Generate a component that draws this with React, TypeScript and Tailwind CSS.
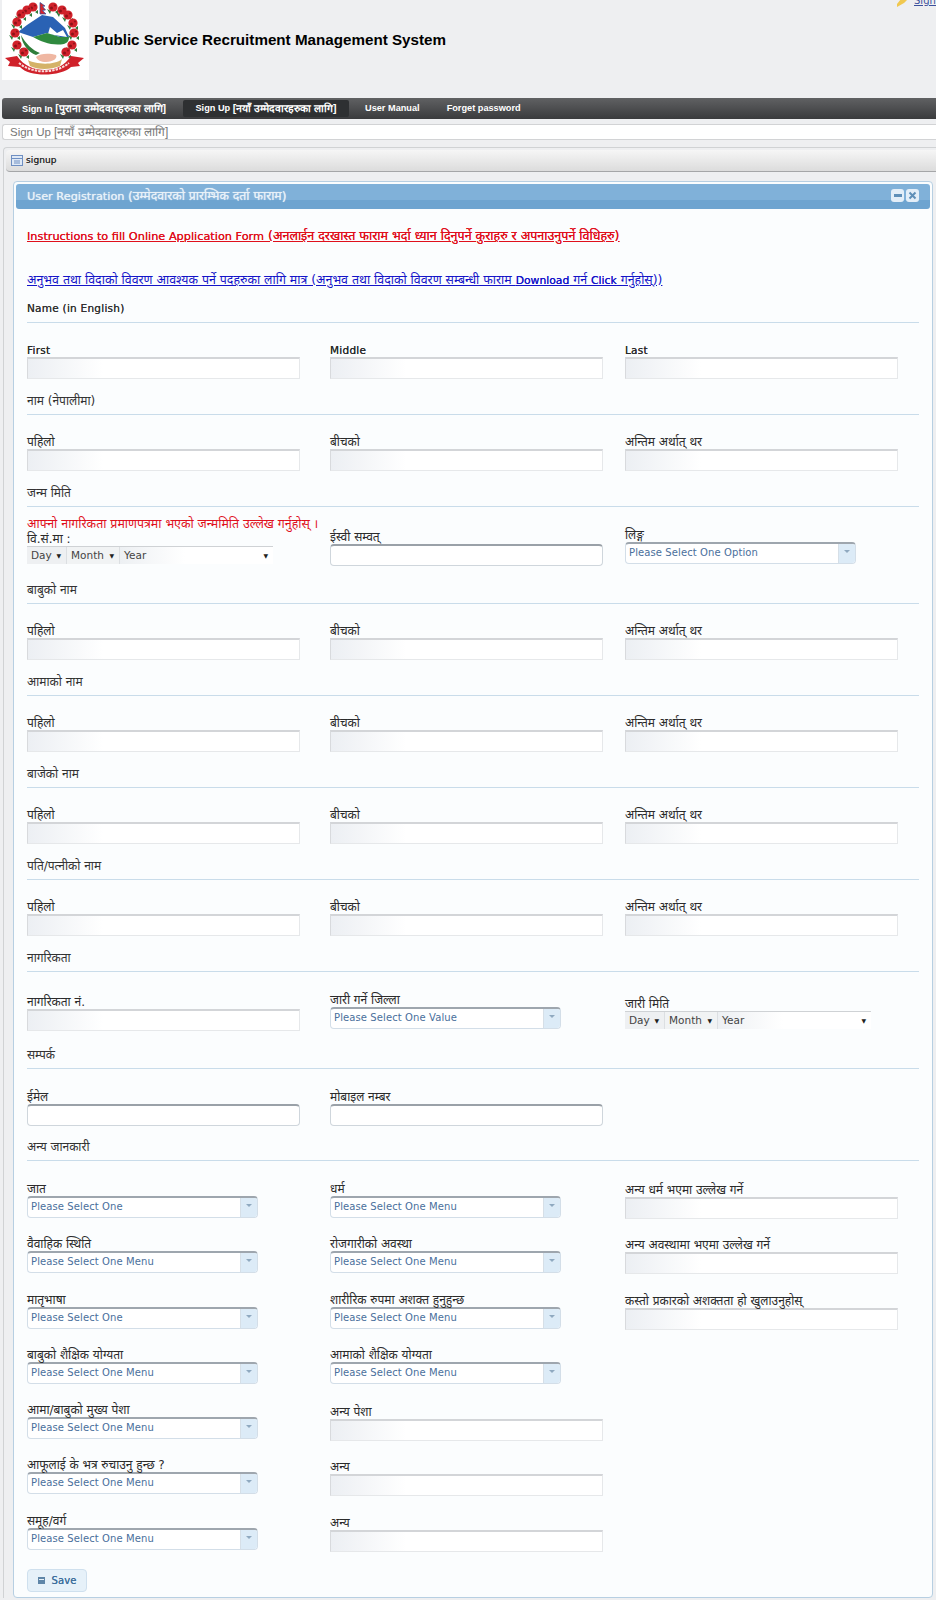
import React from "react";

const FONT = "font-['DejaVu_Sans','Noto_Sans',sans-serif]";
const SOFT = "[text-shadow:0_0_0.6px_currentColor]";

function isLatin(t: unknown) {
  return typeof t === "string" && /^[\x00-\x7f]+$/.test(t);
}

function Emblem() {
  const flowers: [number, number][] = [
    [33, 7], [27, 10], [21, 14], [17, 22], [15, 33], [17, 45], [24, 52],
    [53, 7], [62, 10], [68, 15], [73, 23], [74, 33], [72, 45], [66, 52],
  ];
  return (
    <svg width="87" height="80" viewBox="2 0 87 80" className="block">
      <rect x="2" width="87" height="80" fill="#ffffff" />
      <path d="M18 32 L27 25 L33 21 L42 15 L53 17 L65 28 L69 37 L60 37 L47 33 L33 37Z" fill="#2a62b4" />
      <path d="M50 27 L57 33 L63 30 L67 37 L48 34Z" fill="#ffffff" />
      <path d="M33 37 L47 33 L60 37 L69 37 C69 41 67 43 64 44 C52 46 42 42 33 37Z" fill="#2f8a3f" />
      <path d="M21 35 C26 44 32 50 40 53 L36 55 C28 52 22 44 21 35Z" fill="#2f7d3a" />
      <path d="M26 37 C36 44 50 48 64 45 C62 50 57 53 50 54 L41 53 C34 50 29 44 26 37Z" fill="#ffffff" />
      <path d="M36 57 C40 53 50 53 56 55 C58 58 53 62 46 62 C41 62 37 60 36 57Z" fill="#efb7a2" />
      <path d="M28 60 C34 64 54 66 62 59 L60 66 C50 70 38 70 30 66Z" fill="#d4b268" />
      {flowers.map(([x, y], i) => (
        <g key={i}>
          <path d={`M${x - 6} ${y + 2}l4 2-1 3zM${x + 5} ${y + 3}l-3 2 3 2z`} fill="#2e7a3a" />
          <circle cx={x} cy={y} r="4.6" fill="#d0212a" />
          <circle cx={x - 1.5} cy={y + 1} r="1.5" fill="#8e1218" />
          <circle cx={x + 2} cy={y - 1.5} r="1.1" fill="#96151b" />
        </g>
      ))}
      <path d="M40 2.5v11.5h6l-3.5-3.6 3-.4-3-3.6 2.5-.4z" fill="#d8242b" stroke="#2a4a9c" strokeWidth="0.7" />
      <path d="M5 58 L17 56 C24 66 34 70 45 70 C56 70 64 66 71 56 L84 58 L78 63 L80 66 L71 67 C62 76 30 78 20 67 L8 66 L10 62Z" fill="#d0212a" />
      <path d="M19 63 C32 74 56 74 69 63" fill="none" stroke="#f9dcdc" strokeWidth="2" strokeDasharray="2.5 1" />
    </svg>
  );
}

function TextInput({ rounded = false }: { rounded?: boolean }) {
  return rounded ? (
    <div className="h-[22px] w-[273px] rounded-[4px] border border-[#cfd6dc] border-t-[2px] border-t-[#9aa1a8] bg-white" />
  ) : (
    <div className="h-[22px] w-[273px] border border-[#e6e8ea] border-t-[2px] border-t-[#d3d5d8] border-l-[#d8dadd] bg-[linear-gradient(90deg,#eceff3,#ffffff_75px)]" />
  );
}

function ComboBox({ text }: { text: string }) {
  return (
    <div className="flex h-[22px] w-[231px] overflow-hidden rounded-[4px] border border-[#d3dee8] border-t-[2px] border-t-[#9ea6ae] bg-white">
      <div className="flex-1 truncate pl-[3px] text-[10px] leading-[18px] tracking-[0.1px] text-[#4a6f9c]">{text}</div>
      <div className="flex w-[17px] items-start justify-center border-l border-l-[#d6dfe7] bg-[#dcebf7] pt-[6px]">
        <div className="h-0 w-0 border-x-[3px] border-t-[3px] border-x-transparent border-t-[#8fa9c0]" />
      </div>
    </div>
  );
}

function DateSelect() {
  const seg = "flex h-[17px] items-center justify-between border-r border-r-[#dcdfe2] pl-[4px] pr-[5px] text-[10.5px] text-[#444]";
  const arrow = <span className="text-[6px] text-[#222]">▼</span>;
  return (
    <div className="flex h-[17px] w-[246px] border-t border-t-[#cfd2d5] shadow-[0_1px_0_#e8eaec]">
      <div className={`${seg} w-[40px] bg-[#eef0f2]`}><span>Day</span>{arrow}</div>
      <div className={`${seg} w-[53px] bg-[#f1f3f4]`}><span>Month</span>{arrow}</div>
      <div className={`${seg} flex-1 border-r-0 bg-[linear-gradient(90deg,#edf0f3,#ffffff_65px)]`}><span>Year</span>{arrow}</div>
    </div>
  );
}

function Label({ children }: { children: string }) {
  return (
    <div className={`h-[14px] whitespace-nowrap leading-[14px] text-[#2b2b2b] ${isLatin(children) ? `text-[10.5px] tracking-[0.25px] ${SOFT}` : "text-[12px]"}`}>
      {children}
    </div>
  );
}

function Heading({ children }: { children: string }) {
  return (
    <div className={`h-[30px] border-b border-b-[#c9dcea] leading-[14px] text-[#333] ${isLatin(children) ? `pt-[8px] text-[10.5px] tracking-[0.25px] ${SOFT}` : "pt-[9px] text-[12px]"}`}>
      {children}
    </div>
  );
}

function Grid({ className, children }: { className: string; children: React.ReactNode }) {
  return <div className={`grid grid-cols-[303px_295px_1fr] ${className}`}>{children}</div>;
}

function Names({ a, b, c }: { a: string; b: string; c: string }) {
  return (
    <Grid className="h-[62px] pt-[20px]">
      {[a, b, c].map((t) => (
        <div key={t}>
          <Label>{t}</Label>
          <TextInput />
        </div>
      ))}
    </Grid>
  );
}

function NepaliNames() {
  return <Names a="पहिलो" b="बीचको" c="अन्तिम अर्थात् थर" />;
}

function SelectCell({ label, text, top }: { label: string; text: string; top?: string }) {
  return (
    <div className={top}>
      <Label>{label}</Label>
      <ComboBox text={text} />
    </div>
  );
}

function InputCell({ label, top }: { label: string; top: string }) {
  return (
    <div className={top}>
      <Label>{label}</Label>
      <TextInput />
    </div>
  );
}

const OTHER: { a: [string, string]; b?: [string, string]; bInput?: string; c?: string }[] = [
  { a: ["जात", "Please Select One"], b: ["धर्म", "Please Select One Menu"], c: "अन्य धर्म भएमा उल्लेख गर्ने" },
  { a: ["वैवाहिक स्थिति", "Please Select One Menu"], b: ["रोजगारीको अवस्था", "Please Select One Menu"], c: "अन्य अवस्थामा भएमा उल्लेख गर्ने" },
  { a: ["मातृभाषा", "Please Select One"], b: ["शारीरिक रुपमा अशक्त हुनुहुन्छ", "Please Select One Menu"], c: "कस्तो प्रकारको अशक्तता हो खुलाउनुहोस्" },
  { a: ["बाबुको शैक्षिक योग्यता", "Please Select One Menu"], b: ["आमाको शैक्षिक योग्यता", "Please Select One Menu"] },
  { a: ["आमा/बाबुको मुख्य पेशा", "Please Select One Menu"], bInput: "अन्य पेशा" },
  { a: ["आफूलाई के भत्र रुचाउनु हुन्छ ?", "Please Select One Menu"], bInput: "अन्य" },
  { a: ["समूह/वर्ग", "Please Select One Menu"], bInput: "अन्य" },
];

export default function App() {
  return (
    <div className={`relative h-[1600px] w-[936px] overflow-hidden bg-[#eeeff1] ${FONT}`}>
      <div className="absolute left-[896px] top-[-6px] flex items-center whitespace-nowrap">
        <svg width="13" height="14" viewBox="0 0 13 14">
          <path d="M1 13 L8 9 L11 6 L11 0 L5 0 L5 5 L1 10Z" fill="#f0c850" />
        </svg>
        <span className="ml-[5px] text-[10px] leading-[14px] text-[#3b4f9c] underline">Sign In</span>
      </div>

      <header className="flex h-[98px] items-start pl-[2px]">
        <Emblem />
        <h1 className="ml-[5px] mt-[31px] font-['Liberation_Sans',sans-serif] text-[15.2px] font-bold leading-[18px] text-black">
          Public Service Recruitment Management System
        </h1>
      </header>

      <nav className="ml-[2px] flex h-[21px] items-center rounded-l-[3px] bg-[linear-gradient(#606163,#3a3b3d)] font-['Liberation_Sans','DejaVu_Sans',sans-serif] text-[9.2px] font-bold text-white">
        <span className="ml-[20px] w-[146px] whitespace-nowrap">Sign In <span className="text-[10.5px]">[पुराना उम्मेदवारहरुका लागि]</span></span>
        <span className="ml-[15px] flex h-[17px] w-[166px] items-center justify-center whitespace-nowrap rounded-[2px] bg-[#2e3032]">Sign Up&nbsp;<span className="text-[10.5px]">[नयाँ उम्मेदवारहरुका लागि]</span></span>
        <span className="ml-[16px]">User Manual</span>
        <span className="ml-[27px]">Forget password</span>
      </nav>

      <div className="ml-[2px] mt-[5px] h-[16px] rounded-l-[3px] border border-r-0 border-[#d2d3d5] bg-white pl-[7px] font-['Liberation_Sans','DejaVu_Sans',sans-serif] text-[11.5px] leading-[14px] text-[#777]">
        Sign Up <span className="text-[12px]">[नयाँ उम्मेदवारहरुका लागि]</span>
      </div>

      <main className="ml-[3px] mt-[7px] rounded-tl-[4px] border-l border-t border-[#d0d2d4] pl-[2px] pt-[2px]">
        <div className="flex h-[22px] items-center rounded-l-[4px] border-b border-b-[#a5a6a8] bg-[linear-gradient(#f6f6f6,#dcdcdc)] pl-[5px]">
          <svg width="12" height="11" viewBox="0 0 12 11">
            <rect x="0.5" y="0.5" width="11" height="10" fill="#dfe9f6" stroke="#6f8fc2" />
            <path d="M1 3.5h10M3 6h6M3 8h6" stroke="#6f8fc2" />
          </svg>
          <span className={`ml-[3px] text-[9px] tracking-[0.1px] text-[#333] ${SOFT}`}>signup</span>
        </div>

        <section className="ml-[7px] mt-[9px] h-[1417px] w-[920px] rounded-[4px] border border-[#b7cfe2] bg-[#fbfdfe] px-[2px] pt-[2px]">
          <div className="relative flex h-[25px] items-center overflow-hidden rounded-[3px] bg-[linear-gradient(#80b1d9,#80b1d9_65%,#6ea4d0_65%,#6ea4d0)] pl-[11px] text-[#e8f1f8]">
            <span className="text-[11.3px] [text-shadow:0_0_0.8px_currentColor]">User Registration <span className="text-[12.3px]">(उम्मेदवारको प्रारम्भिक दर्ता फाराम)</span></span>
            <div className="absolute right-[11px] top-[5px] flex gap-[2px]">
              <div className="flex h-[13px] w-[13px] items-center justify-center rounded-[3px] bg-[#e3eef8]">
                <div className="h-[3px] w-[8px] bg-[#5f8fb8]" />
              </div>
              <div className="flex h-[13px] w-[13px] items-center justify-center rounded-[3px] bg-[#e3eef8]">
                <svg width="9" height="9" viewBox="0 0 9 9"><path d="M1.5 1.5l6 6M7.5 1.5l-6 6" stroke="#5f8fb8" strokeWidth="2" /></svg>
              </div>
            </div>
          </div>

          <div className="px-[11px]">
            <div className={`mt-[20px] h-[14px] whitespace-nowrap text-[12.5px] leading-[14px] text-[#e0101c] underline ${SOFT}`}>
              <span className="text-[11.3px]">Instructions to fill Online Application Form</span> (अनलाईन दरखास्त फाराम भर्दा ध्यान दिनुपर्ने कुराहरु र अपनाउनुपर्ने विधिहरु)
            </div>
            <div className="mt-[30px] h-[14px] whitespace-nowrap text-[12.4px] leading-[14px] text-[#1414c8] underline">
              अनुभव तथा विदाको विवरण आवश्यक पर्ने पदहरुका लागि मात्र (अनुभव तथा विदाको विवरण सम्बन्धी फाराम <span className={`text-[10.8px] ${SOFT}`}>Download</span> गर्न <span className={`text-[10.8px] ${SOFT}`}>Click</span> गर्नुहोस्))
            </div>

            <div className="mt-[6px]">
              <Heading>Name (in English)</Heading>
              <Names a="First" b="Middle" c="Last" />
              <Heading>नाम (नेपालीमा)</Heading>
              <NepaliNames />
              <Heading>जन्म मिति</Heading>
              <Grid className="h-[67px]">
                <div className="pt-[9px]">
                  <div className="h-[16px] whitespace-nowrap text-[12.4px] leading-[15px] text-[#e0101c]">आफ्नो नागरिकता प्रमाणपत्रमा भएको जन्ममिति उल्लेख गर्नुहोस् ।</div>
                  <Label>वि.सं.मा :</Label>
                  <DateSelect />
                </div>
                <div className="pt-[23px]">
                  <Label>ईस्वी सम्वत्</Label>
                  <TextInput rounded />
                </div>
                <div className="pt-[21px]">
                  <Label>लिङ्ग</Label>
                  <ComboBox text="Please Select One Option" />
                </div>
              </Grid>
              <Heading>बाबुको नाम</Heading>
              <NepaliNames />
              <Heading>आमाको नाम</Heading>
              <NepaliNames />
              <Heading>बाजेको नाम</Heading>
              <NepaliNames />
              <Heading>पति/पत्नीको नाम</Heading>
              <NepaliNames />
              <Heading>नागरिकता</Heading>
              <Grid className="h-[67px]">
                <InputCell label="नागरिकता नं." top="pt-[23px]" />
                <SelectCell label="जारी गर्ने जिल्ला" text="Please Select One Value" top="pt-[21px]" />
                <div className="pt-[25px]">
                  <Label>जारी मिति</Label>
                  <DateSelect />
                </div>
              </Grid>
              <Heading>सम्पर्क</Heading>
              <Grid className="h-[62px]">
                <div className="pt-[21px]">
                  <Label>ईमेल</Label>
                  <TextInput rounded />
                </div>
                <div className="pt-[21px]">
                  <Label>मोबाइल नम्बर</Label>
                  <TextInput rounded />
                </div>
              </Grid>
              <Heading>अन्य जानकारी</Heading>
              <div className="pt-[21px]">
                {OTHER.map((row, i) => (
                  <Grid key={i} className="h-[55.3px]">
                    <SelectCell label={row.a[0]} text={row.a[1]} />
                    {row.b ? (
                      <SelectCell label={row.b[0]} text={row.b[1]} />
                    ) : (
                      <InputCell label={row.bInput as string} top="pt-[2px]" />
                    )}
                    {row.c ? <InputCell label={row.c} top="pt-[1px]" /> : <div />}
                  </Grid>
                ))}
              </div>
              <button className="flex h-[23px] w-[60px] items-center justify-center gap-[7px] rounded-[4px] border border-[#cfe0ee] bg-[#e6f1f9] text-[10px] tracking-[0.1px] text-[#3f6f9c]">
                <svg width="7" height="7" viewBox="0 0 7 7"><path d="M0 0h7v7H0z" fill="#5f86a8" /><path d="M1 2.5h5" stroke="#e6f1f9" /></svg>
                <span className={SOFT}>Save</span>
              </button>
            </div>
          </div>
        </section>
      </main>
    </div>
  );
}
